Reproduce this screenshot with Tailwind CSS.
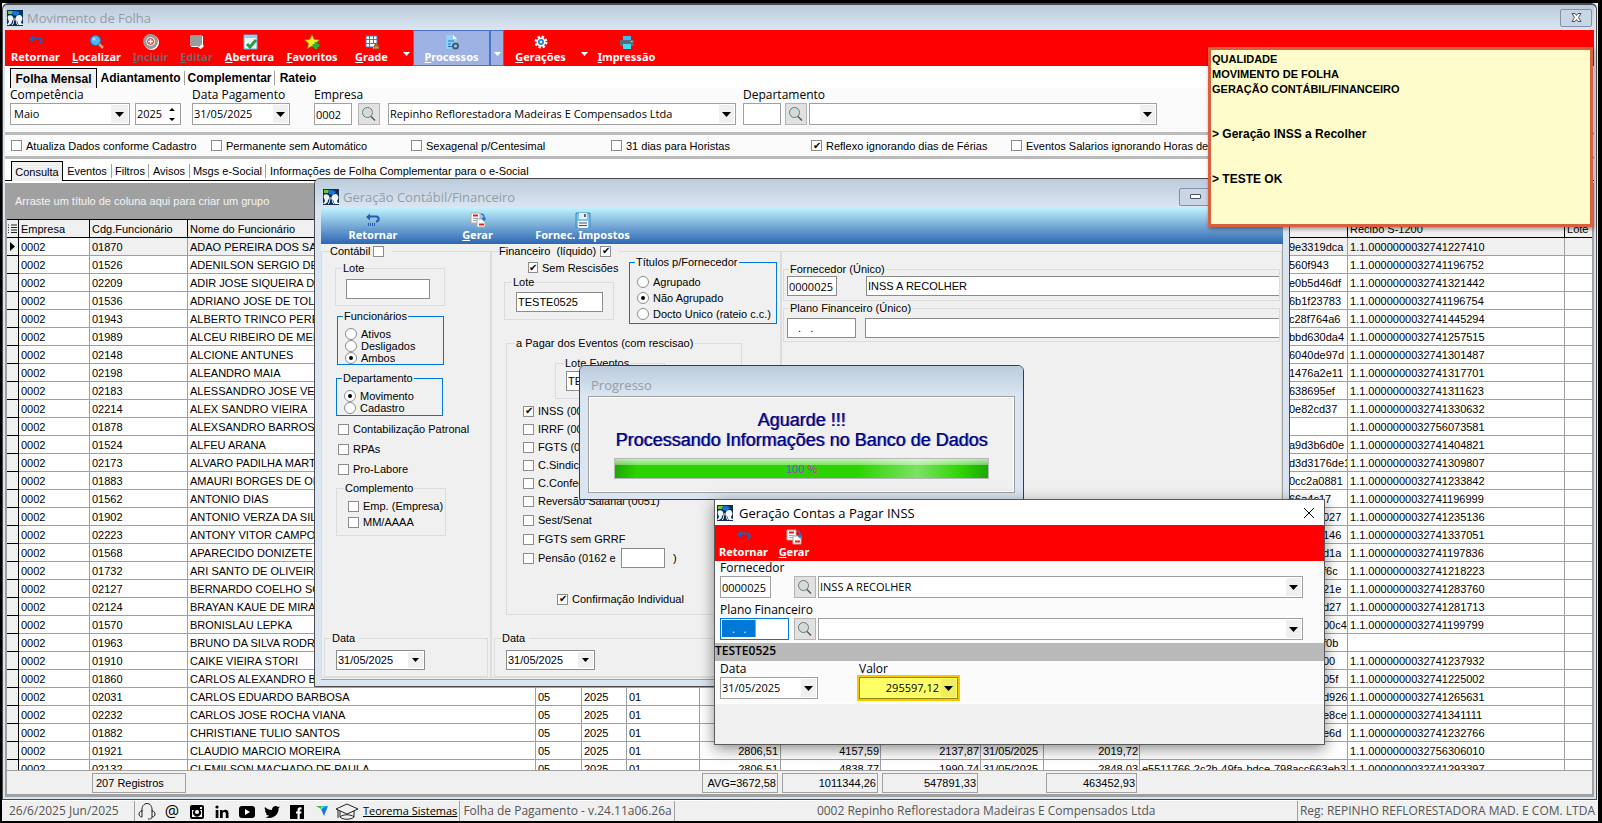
<!DOCTYPE html>
<html lang="pt-BR">
<head>
    <meta charset="UTF-8">
    <meta name="viewport" content="width=device-width, initial-scale=1.0">
    <title>Movimento de Folha</title>
    <script src="https://cdn.jsdelivr.net/npm/@tailwindcss/browser@4"></script>
</head>
<body class="bg-black h-screen overflow-hidden pt-[3px] pb-[2px] pl-[2px] pr-[4px] font-['Liberation_Sans',Arial,sans-serif] text-[11px] leading-[14px] text-black">

    <!-- Icons -->
    <svg class="hidden">
        <symbol id="i-app" viewBox="0 0 16 16">
            <rect width="16" height="16" fill="#0b2f57"/>
            <path d="M1 1h5l-1 3H1z" fill="#6ecb2f"/><path d="M5 2c3-2 6-1 8 1l-3 3-4-1z" fill="#1277e0"/>
            <path d="M1 6c1-1 4-1 5 1s0 3-1 4c0 2-1 3-3 4H0l2-3c0-2-2-3-1-6zM9 7c1-2 5-3 6 0 1 2 0 3-1 5 0 1 1 2 2 2v1h-4c-2-2-1-3-2-4s-2-2-1-4z" fill="#f2f7fc"/>
            <path d="M5 15c2-1 1-3 2-5 0-2 1-2 2 0s0 4 2 5" fill="none" stroke="#f2f7fc"/>
        </symbol>
        <symbol id="i-back" viewBox="0 0 16 16">
            <path d="M1 5l4-3.500v2h6c5 0 5 7 0 7v-2c2 0 2-3 0-3H5v3z" fill="#1f5fb8"/>
            <path d="M3.500 11v3M5.500 11v3M7.500 11v3M9.500 11v3" stroke="#1f5fb8" stroke-width="1"/>
        </symbol>
        <symbol id="i-find" viewBox="0 0 16 16">
            <path d="M10 10l4 4" stroke="#c9a27a" stroke-width="2.500"/>
            <circle cx="6.500" cy="6.500" r="5" fill="#4db4f5" stroke="#1c74c8"/><circle cx="5" cy="5" r="1.500" fill="#b9e2fc"/>
        </symbol>
        <symbol id="i-add" viewBox="0 0 16 16">
            <circle cx="8.500" cy="8.500" r="7.500" fill="#fff"/><circle cx="7.500" cy="7.500" r="7.500" fill="#9b9b9b"/>
            <circle cx="7.500" cy="7.500" r="4" fill="#c44" stroke="#fff"/><path d="M7.500 5v5M5 7.500h5" stroke="#fff" stroke-width="1.500"/>
        </symbol>
        <symbol id="i-edit" viewBox="0 0 16 16">
            <path d="M2 2h12v9l1 1-3 3-2-1-1-1H2z" fill="#fff"/><path d="M1 1h12v9l-3 3-2-1H1z" fill="#9b9b9b"/>
        </symbol>
        <symbol id="i-open" viewBox="0 0 16 16">
            <path d="M2 1h13v14H2z" fill="#e9f6fd" stroke="#5fb0dc"/><path d="M2 1h13v3H2z" fill="#8fd0f2"/>
            <path d="M5 10l3 3 6-7" fill="none" stroke="#2e9e3b" stroke-width="3"/>
        </symbol>
        <symbol id="i-star" viewBox="0 0 16 16">
            <path d="M8 .500l2.200 4.800 5.300.600-4 3.500 1.200 5.300L8 12.100l-4.700 2.600 1.200-5.300-4-3.500 5.300-.600z" fill="#ffe62e" stroke="#8a7400" stroke-width=".800"/>
            <path d="M12 8v7M8.500 11.500h7" stroke="#2fb12f" stroke-width="3"/>
        </symbol>
        <symbol id="i-grid" viewBox="0 0 16 16">
            <path d="M2 2h11v11H2z" fill="#fff" stroke="#2f7fd0"/><path d="M2 5.500h11M2 9.500h11M5.500 2v11M9.500 2v11" stroke="#2f7fd0"/>
            <path d="M9 10h5v5H9z" fill="#fff"/><path d="M10 12h5v3h-5zM11 12v-2h3v2" fill="#d4a04a" stroke="#9c4a2a"/>
        </symbol>
        <symbol id="i-proc" viewBox="0 0 16 16">
            <path d="M2 1h7l4 4v10H2z" fill="#8fd0f7"/><path d="M9 1l4 4H9z" fill="#fff"/><path d="M4 7h6M4 10h3M4 12.500h4" stroke="#1c6fd0"/>
            <circle cx="11.500" cy="12" r="2.500" fill="none" stroke="#4b5a6b" stroke-width="2"/>
        </symbol>
        <symbol id="i-gear" viewBox="0 0 16 16">
            <circle cx="8" cy="8" r="5" fill="none" stroke="#fff" stroke-width="3" stroke-dasharray="2.200 1.727"/>
            <circle cx="8" cy="8" r="4.500" fill="#fff"/><circle cx="8" cy="8" r="3" fill="#1d86e0"/><circle cx="8" cy="8" r="1.200" fill="#fff"/>
        </symbol>
        <symbol id="i-print" viewBox="0 0 16 16">
            <path d="M4 2h8v4H4z" fill="#42b8f0"/><path d="M1 6h14v6H1z" fill="#5a6b78"/><path d="M4 10h8v5H4z" fill="#3fdcf0"/><path d="M12 7.500h1.500" stroke="#bfe8ff"/>
        </symbol>
        <symbol id="i-gen" viewBox="0 0 16 16">
            <path d="M1 1h9v10H1z" fill="#fff" stroke="#b8a8a0"/><path d="M3 3.500h5" stroke="#e02020" stroke-width="2"/><path d="M3 6.500h5M3 8.500h4" stroke="#8fa5c8"/>
            <path d="M7 7h8v8H7z" fill="#fff" stroke="#b8a8a0"/><path d="M9 12.500h5" stroke="#e02020" stroke-width="2"/>
            <path d="M11 2c3 0 3 2 3 5M12 6l2 2.500L15.500 6" fill="none" stroke="#1f78d0" stroke-width="1.500"/>
        </symbol>
        <symbol id="i-save" viewBox="0 0 16 16">
            <path d="M1 1h14v15H1z" fill="#7ec4ee" stroke="#3a86c0"/><path d="M4 1h8v6H4z" fill="#e4eef5"/><path d="M9 2h2v3H9z" fill="#4a6a88"/>
            <path d="M3 9h10v7H3z" fill="#f4f4f4"/><path d="M4 11h8M4 13.500h8" stroke="#555"/>
        </symbol>
        <symbol id="i-lens" viewBox="0 0 16 16">
            <circle cx="6.500" cy="6.500" r="5" fill="#d3dcda" stroke="#6b7a78"/><path d="M10 10.500l4 4" stroke="#555" stroke-width="1.500"/>
        </symbol>
        <symbol id="i-down" viewBox="0 0 9 5"><path d="M0 0h9L4.500 5z" fill="currentColor"/></symbol>
    </svg>

    <div class="h-full flex flex-col bg-[#f0f0f0]">

        <!-- Main window -->
        <main class="flex-1 min-h-0 mr-px flex flex-col border border-t-2 border-[#4a4a4a] rounded-t-[6px] bg-[#dae5f1] px-[2px] pb-[2px] overflow-hidden">
            <header class="h-[25px] shrink-0 flex items-center justify-between pl-[2px] pr-[2px] bg-linear-to-b from-[#bccbdb] to-[#dae6f2]">
                <h1 class="flex items-center gap-1 font-['Open_Sans',sans-serif] text-[13px] text-[#969ca3]">
                    <svg class="size-4"><use href="#i-app"/></svg>Movimento de Folha
                </h1>
                <button aria-label="Fechar" class="w-8 h-[18px] border border-[#8290b0] rounded-[2px] flex items-center justify-center bg-[#c9d6e4]">
                    <svg class="w-[11px] h-[9px]" viewBox="0 0 11 9"><path d="M1 .500h3l1.500 2 1.500-2h3L7.500 4.500 10 8.500H7l-1.500-2-1.500 2H1l2.500-4z" fill="#fff" stroke="#4b5060"/></svg>
                </button>
            </header>

            <nav class="h-9 shrink-0 flex items-stretch bg-[#ff0000] text-white font-['Noto_Sans',sans-serif] font-bold text-[11px]">
                <button class="w-[61px] flex flex-col items-center pt-1"><svg class="size-4"><use href="#i-back"/></svg>Retornar</button>
                <button class="w-[61px] flex flex-col items-center pt-1"><svg class="size-4"><use href="#i-find"/></svg><span><u>L</u>ocalizar</span></button>
                <button class="w-[47px] flex flex-col items-center pt-1 text-[#806464]"><svg class="size-4"><use href="#i-add"/></svg><span><u>I</u>ncluir</span></button>
                <button class="w-[45px] flex flex-col items-center pt-1 text-[#806464]"><svg class="size-4"><use href="#i-edit"/></svg><span><u>E</u>ditar</span></button>
                <button class="w-[61px] flex flex-col items-center pt-1"><svg class="size-4"><use href="#i-open"/></svg><span><u>A</u>bertura</span></button>
                <button class="w-[64px] flex flex-col items-center pt-1"><svg class="size-4"><use href="#i-star"/></svg><span><u>F</u>avoritos</span></button>
                <button class="w-[55px] flex flex-col items-center pt-1"><svg class="size-4"><use href="#i-grid"/></svg><span><u>G</u>rade</span></button>
                <button aria-label="Mais opções de grade" class="w-[14px] flex items-center justify-center pt-3"><svg class="w-[7px] h-[4px]"><use href="#i-down"/></svg></button>
                <button class="w-[77px] flex flex-col items-center pt-[3px] bg-[#9db2e2] border border-[#4a72cc]"><svg class="size-4"><use href="#i-proc"/></svg><span><u>P</u>rocessos</span></button>
                <button aria-label="Mais processos" class="w-[14px] flex items-center justify-center pt-3 bg-[#9db2e2] border border-[#4a72cc]"><svg class="w-[7px] h-[4px]"><use href="#i-down"/></svg></button>
                <button class="w-[73px] flex flex-col items-center pt-1"><svg class="size-4"><use href="#i-gear"/></svg><span><u>G</u>erações</span></button>
                <button aria-label="Mais gerações" class="w-[14px] flex items-center justify-center pt-3"><svg class="w-[7px] h-[4px]"><use href="#i-down"/></svg></button>
                <button class="w-[71px] flex flex-col items-center pt-1"><svg class="size-4"><use href="#i-print"/></svg><span><u>I</u>mpressão</span></button>
            </nav>

            <div role="tablist" class="h-[22px] shrink-0 flex items-center bg-white pl-[5px] pt-[2px] font-bold text-[12px]">
                <button role="tab" class="h-5 w-[87px] border border-b-0 border-black bg-[#f0f0f0]">Folha Mensal</button>
                <button role="tab" class="w-[88px] border-r border-[#a0a0a0]">Adiantamento</button>
                <button role="tab" class="w-[90px] border-r border-[#a0a0a0]">Complementar</button>
                <button role="tab" class="w-[46px]">Rateio</button>
            </div>

            <form class="h-11 shrink-0 flex items-start bg-[#fbfbfb] pl-[5px] font-['Open_Sans',sans-serif] text-[11px]">
                <div class="w-[120px]">
                    <label for="competencia" class="block h-[15px] leading-[13px] text-[12px]">Competência</label>
                    <div class="h-[22px] flex border border-[#a0a0a0] bg-white">
                        <select id="competencia" class="appearance-none flex-1 min-w-0 pl-[3px]"><option>Maio</option></select>
                        <span class="w-[17px] m-px bg-[#f0f0f0] flex items-center justify-center"><svg class="w-[9px] h-[5px]"><use href="#i-down"/></svg></span>
                    </div>
                </div>
                <div class="ml-[5px] mt-[15px] w-[46px] h-[22px] flex border border-[#a0a0a0] bg-white">
                    <input type="text" aria-label="Ano" value="2025" class="w-[28px] pl-[1px]">
                    <button type="button" aria-label="Alterar ano" class="flex-1 flex items-center justify-center"><svg class="w-[6px] h-[13px]" viewBox="0 0 6 13"><path d="M0 3h6L3 0zM0 10h6L3 13z"/></svg></button>
                </div>
                <div class="ml-[11px] w-[98px]">
                    <label for="pagamento" class="block h-[15px] leading-[13px] text-[12px] whitespace-nowrap">Data Pagamento</label>
                    <div class="h-[22px] flex border border-[#a0a0a0] bg-white">
                        <input id="pagamento" type="text" value="31/05/2025" class="flex-1 min-w-0 pl-[1px]">
                        <button type="button" aria-label="Abrir calendário" class="w-[15px] m-px bg-[#f0f0f0] flex items-center justify-center"><svg class="w-[9px] h-[5px]"><use href="#i-down"/></svg></button>
                    </div>
                </div>
                <div class="ml-[24px] w-[38px]">
                    <label for="empresa" class="block h-[15px] leading-[13px] text-[12px] whitespace-nowrap">Empresa</label>
                    <input id="empresa" type="text" value="0002" class="h-[22px] w-full border border-[#a0a0a0] bg-white pl-[1px]">
                </div>
                <button type="button" aria-label="Buscar empresa" class="ml-[6px] mt-[15px] size-[22px] border border-[#b4b4b4] bg-[#e1e1e1] flex items-center justify-center"><svg class="size-4"><use href="#i-lens"/></svg></button>
                <div class="ml-[8px] mt-[15px] w-[348px] h-[22px] flex border border-[#a0a0a0] bg-white">
                    <select aria-label="Nome da empresa" class="appearance-none flex-1 min-w-0 pl-px"><option>Repinho Reflorestadora Madeiras E Compensados Ltda</option></select>
                    <span class="w-[15px] m-px bg-[#f0f0f0] flex items-center justify-center"><svg class="w-[9px] h-[5px]"><use href="#i-down"/></svg></span>
                </div>
                <div class="ml-[7px] w-[38px]">
                    <label for="departamento" class="block h-[15px] leading-[13px] text-[12px] whitespace-nowrap">Departamento</label>
                    <input id="departamento" type="text" class="h-[22px] w-full border border-[#a0a0a0] bg-white">
                </div>
                <button type="button" aria-label="Buscar departamento" class="ml-[4px] mt-[15px] size-[22px] border border-[#b4b4b4] bg-[#e1e1e1] flex items-center justify-center"><svg class="size-4"><use href="#i-lens"/></svg></button>
                <div class="ml-[2px] mt-[15px] w-[348px] h-[22px] flex border border-[#a0a0a0] bg-white">
                    <select aria-label="Nome do departamento" class="appearance-none flex-1 min-w-0"><option></option></select>
                    <span class="w-[15px] m-px bg-[#f0f0f0] flex items-center justify-center"><svg class="w-[9px] h-[5px]"><use href="#i-down"/></svg></span>
                </div>
            </form>

            <div class="h-[27px] shrink-0 flex items-center border-y-3 border-[#bbbbbb] bg-[#fbfbfb] pl-[6px] text-[11px]">
                <label class="w-[200px] flex items-center gap-1"><input type="checkbox" class="appearance-none size-[11px] border border-[#8c8c8c] bg-white">Atualiza Dados conforme Cadastro</label>
                <label class="w-[200px] flex items-center gap-1"><input type="checkbox" class="appearance-none size-[11px] border border-[#8c8c8c] bg-white">Permanente sem Automático</label>
                <label class="w-[200px] flex items-center gap-1"><input type="checkbox" class="appearance-none size-[11px] border border-[#8c8c8c] bg-white">Sexagenal p/Centesimal</label>
                <label class="w-[200px] flex items-center gap-1"><input type="checkbox" class="appearance-none size-[11px] border border-[#8c8c8c] bg-white">31 dias para Horistas</label>
                <label class="w-[200px] flex items-center gap-1"><input type="checkbox" checked class="appearance-none size-[11px] border border-[#8c8c8c] bg-white flex items-center justify-center before:content-['✔'] before:text-[10px] before:leading-none">Reflexo ignorando dias de Férias</label>
                <label class="flex items-center gap-1"><input type="checkbox" class="appearance-none size-[11px] border border-[#8c8c8c] bg-white">Eventos Salarios ignorando Horas de Falta</label>
            </div>

            <div role="tablist" class="h-[24px] shrink-0 flex bg-white pt-[2px] text-[11px]">
                <span class="w-[6px] h-5 border-b border-black"></span>
                <button role="tab" class="w-[52px] h-5 border border-b-0 border-black bg-[#f0f0f0]">Consulta</button>
                <div class="flex-1 h-5 flex items-center border-b border-black">
                    <button role="tab" class="w-[49px] border-r border-[#a0a0a0]">Eventos</button>
                    <button role="tab" class="w-[37px] border-r border-[#a0a0a0]">Filtros</button>
                    <button role="tab" class="w-[41px] border-r border-[#a0a0a0]">Avisos</button>
                    <button role="tab" class="w-[76px] border-r border-[#a0a0a0]">Msgs e-Social</button>
                    <button role="tab" class="px-[4px]">Informações de Folha Complementar para o e-Social</button>
                </div>
            </div>

            <section class="flex-1 min-h-0 flex flex-col bg-[#f0f0f0] border-l-2 border-r-2 border-b-3 border-[#a0a0a0]">
                <p class="h-9 shrink-0 flex items-center pl-[8px] bg-[#a0a0a0] text-[#f4f4f4]">Arraste um título de coluna aqui para criar um grupo</p>
                <div class="flex-1 min-h-0 overflow-hidden bg-white">
                    <table class="w-full table-fixed border-separate border-spacing-0">
                        <colgroup>
                            <col class="w-[12px]"><col class="w-[71px]"><col class="w-[98px]"><col class="w-[348px]"><col class="w-[46px]"><col class="w-[45px]"><col class="w-[73px]"><col class="w-[81px]"><col class="w-[100px]"><col class="w-[100px]"><col class="w-[63px]"><col class="w-[96px]"><col class="w-[208px]"><col class="w-[217px]"><col>
                        </colgroup>
                        <thead class="bg-[#f0f0f0] text-left">
                            <tr>
                                <th class="h-[19px] border-y border-r border-black p-0"><svg class="size-[9px] mx-auto" viewBox="0 0 9 9"><path d="M0 1h1M3 1h6M0 3.500h1M3 3.500h6M0 6h1M3 6h6M0 8.500h1M3 8.500h6" stroke="#222"/></svg></th>
                                <th class="h-[19px] border-y border-r border-black font-normal p-0 pl-[2px]">Empresa</th>
                                <th class="h-[19px] border-y border-r border-black font-normal p-0 pl-[2px]">Cdg.Funcionário</th>
                                <th class="h-[19px] border-y border-r border-black font-normal p-0 pl-[2px]">Nome do Funcionário</th>
                                <th colspan="9" class="h-[19px] border-y border-r border-black p-0"></th>
                                <th class="h-[19px] border-y border-r border-black font-normal p-0 pl-[2px]">Recibo S-1200</th>
                                <th class="h-[19px] border-y border-black font-normal p-0 pl-[2px]">Lote</th>
                            </tr>
                        </thead>
                        <tbody id="linhas"></tbody>
                    </table>
                </div>
                <div class="h-6 shrink-0 flex items-center border-t border-[#a0a0a0] pl-[85px] leading-[18px]">
                    <div class="w-[94px] h-5 border border-[#a0a0a0] pl-[3px]">207 Registros</div>
                    <div class="ml-[516px] w-[76px] h-5 border border-[#a0a0a0] pr-px text-right">AVG=3672,58</div>
                    <div class="ml-[4px] w-[96px] h-5 border border-[#a0a0a0] pr-px text-right">1011344,26</div>
                    <div class="ml-[4px] w-[96px] h-5 border border-[#a0a0a0] pr-px text-right">547891,33</div>
                    <div class="ml-[68px] w-[91px] h-5 border border-[#a0a0a0] pr-px text-right">463452,93</div>
                </div>
            </section>
        </main>

        <!-- Status bar -->
        <footer class="h-[21px] shrink-0 flex items-center border-t border-white font-['Open_Sans',sans-serif] text-[12px] text-[#555]">
            <span class="w-[133px] self-stretch pl-[7px] pt-[3px] border-r border-[#a0a0a0] whitespace-nowrap">26/6/2025 Jun/2025</span>
            <div class="flex items-center gap-[7px] pl-[3px] text-black">
                <a href="#" aria-label="Suporte"><svg class="size-[18px]" viewBox="0 0 18 18" fill="none" stroke="#222"><path d="M4 9c-1-10 11-10 10 0M4 8v7c-4 0-4-6 0-6M14 8v7c4 0 4-6 0-6M14 15c0 2-2 2-4 2"/></svg></a>
                <a href="#" aria-label="E-mail" class="w-[18px] text-center text-[16px] leading-[18px]">@</a>
                <a href="#" aria-label="Instagram"><svg class="size-[18px]" viewBox="0 0 18 18"><rect x="2" y="3" width="14" height="14" rx="2"/><path d="M4 8h2a4 4 0 106 0h2v7H4z" fill="#fff"/><circle cx="9" cy="10" r="3"/><circle cx="9" cy="10" r="2" fill="#fff"/><path d="M12 5h2v2h-2z" fill="#fff"/></svg></a>
                <a href="#" aria-label="LinkedIn"><svg class="size-[18px]" viewBox="0 0 18 18"><circle cx="4" cy="5" r="1.600"/><path d="M2.700 8h2.700v8H2.700zM7 8h2.600v1.200C11 7 15.500 7 15.500 11v5h-2.700v-4.500c0-2-3.100-2-3.100 0V16H7z"/></svg></a>
                <a href="#" aria-label="YouTube"><svg class="size-[18px]" viewBox="0 0 18 18"><rect x="1" y="4" width="16" height="12" rx="3"/><path d="M7 7l5 3-5 3z" fill="#fff"/></svg></a>
                <a href="#" aria-label="Twitter"><svg class="size-[18px]" viewBox="0 0 18 18"><path d="M2 5c2 2 4 3 7 3 0-4 4-5 6-3l2-.500-1.500 2C16 13 9 18 2 15c2 0 3-.500 4-1.500-2 0-3-1-3-2h1C2 10 2 9 2 8.500L3 9C1.500 7.500 1.500 6 2 5z"/></svg></a>
                <a href="#" aria-label="Facebook"><svg class="size-[18px]" viewBox="0 0 18 18"><rect x="2" y="3" width="14" height="14"/><path d="M9.500 17v-5.500H8V9.500h1.500V8c0-2 1.500-3 4-2.500v2c-1.500 0-1.800.200-1.800 2h1.800l-.300 2h-1.500V17z" fill="#fff"/></svg></a>
                <a href="#" aria-label="Teorema"><svg class="size-[18px]" viewBox="0 0 18 18"><path d="M3 4h6l-1 3z" fill="#35c435"/><path d="M9 4h6l-5 4z" fill="#20c8e8"/><path d="M8 7l7-3-4 10z" fill="#1877e8"/></svg></a>
            </div>
            <a href="#" class="flex items-center gap-1 pl-1 pr-[2px] text-black"><svg class="w-[24px] h-[17px]" viewBox="0 0 24 17" fill="none" stroke="#222"><path d="M1 6l11-5 11 5-11 5zM5 8v6c3-3 11-3 14 0V8M5 14c3 3 11 3 14 0M3 7v8"/></svg><span class="underline text-[11px]">Teorema Sistemas</span></a>
            <span class="w-[216px] self-stretch pl-[3px] pt-[3px] border-x border-[#a0a0a0] whitespace-nowrap">Folha de Pagamento - v.24.11a06.26a</span>
            <span class="flex-1 text-center whitespace-nowrap">0002 Repinho Reflorestadora Madeiras E Compensados Ltda</span>
            <span class="self-stretch pl-[2px] pr-[3px] pt-[3px] border-l border-[#a0a0a0] whitespace-nowrap">Reg: REPINHO REFLORESTADORA MAD. E COM. LTDA</span>
        </footer>
    </div>

    <!-- Geração Contábil/Financeiro -->
    <section class="absolute left-[314px] top-[178px] w-[976px] border border-[#4a4a4a] rounded-t-[6px] bg-[#dae5f1] px-[6px] pb-[6px]">
        <header class="h-[29px] flex items-center justify-between pt-[6px] -mx-[6px] px-[8px] rounded-t-[5px] bg-linear-to-b from-[#bccbdb] to-[#dae6f2]">
            <h2 class="flex items-center gap-1 font-['Open_Sans',sans-serif] text-[13px] text-[#969ca3]"><svg class="size-4"><use href="#i-app"/></svg>Geração Contábil/Financeiro</h2>
            <button aria-label="Minimizar" class="mr-[70px] w-8 h-[18px] border border-[#8290b0] rounded-[2px] flex items-center justify-center bg-[#c9d6e4]"><span class="w-[11px] h-[5px] border border-[#4b5060] bg-white rounded-[1px]"></span></button>
        </header>
        <nav class="h-9 flex bg-linear-to-b from-[#bff2fd] via-[#77a9d6] to-[#2d67b3] text-white font-['Noto_Sans',sans-serif] font-bold text-[11px]">
            <button class="w-[104px] flex flex-col items-center pt-1"><svg class="size-4"><use href="#i-back"/></svg>Retornar</button>
            <button class="w-[105px] flex flex-col items-center pt-1"><svg class="size-4"><use href="#i-gen"/></svg><span><u>G</u>erar</span></button>
            <button class="w-[105px] flex flex-col items-center pt-1"><svg class="size-4"><use href="#i-save"/></svg>Fornec. Impostos</button>
        </nav>
        <div class="h-[436px] flex bg-[#f0f0f0] border-b border-r border-[#a0a0a0] pb-px">
            <fieldset class="w-[170px] flex flex-col border border-[#dcdcdc]">
                <legend class="ml-[8px] pr-2"><label class="h-[14px] flex items-center gap-[3px]">Contábil<input type="checkbox" class="appearance-none size-[11px] border border-[#8c8c8c] bg-white"></label></legend>
                <div class="flex-1 flex flex-col items-start">
                    <fieldset class="ml-[13px] mt-[3px] w-[110px] border border-[#dcdcdc] pl-[10px] pt-1 pb-1.5">
                        <legend class="-ml-[4px] px-px">Lote</legend>
                        <input type="text" aria-label="Lote contábil" class="block w-[84px] h-5 border border-[#8c8c8c] bg-white">
                    </fieldset>
                    <fieldset class="ml-[15px] mt-[3px] w-[107px] border border-[#0078d7] pt-[5px] pl-[7px] leading-[12px]">
                        <legend class="-ml-[2px] px-px leading-[14px]">Funcionários</legend>
                        <label class="h-3 flex items-center gap-1"><input type="radio" name="func" class="appearance-none size-3 rounded-full border border-[#8c8c8c] bg-white">Ativos</label>
                        <label class="h-3 flex items-center gap-1"><input type="radio" name="func" class="appearance-none size-3 rounded-full border border-[#8c8c8c] bg-white">Desligados</label>
                        <label class="h-3 flex items-center gap-1"><input type="radio" name="func" checked class="appearance-none size-3 rounded-full border-4 border-white bg-black outline outline-[#8c8c8c] -outline-offset-1">Ambos</label>
                    </fieldset>
                    <fieldset class="ml-[14px] mt-1.5 w-[107px] border border-[#0078d7] pt-[5px] pb-px pl-[7px] leading-[12px]">
                        <legend class="-ml-[2px] px-px leading-[14px]">Departamento</legend>
                        <label class="h-3 flex items-center gap-1"><input type="radio" name="dep" checked class="appearance-none size-3 rounded-full border-4 border-white bg-black outline outline-[#8c8c8c] -outline-offset-1">Movimento</label>
                        <label class="h-3 flex items-center gap-1"><input type="radio" name="dep" class="appearance-none size-3 rounded-full border border-[#8c8c8c] bg-white">Cadastro</label>
                    </fieldset>
                    <div class="ml-[16px] mt-[3px]">
                        <label class="h-5 flex items-center gap-1"><input type="checkbox" class="appearance-none size-[11px] border border-[#8c8c8c] bg-white">Contabilização Patronal</label>
                        <label class="h-5 flex items-center gap-1"><input type="checkbox" class="appearance-none size-[11px] border border-[#8c8c8c] bg-white">RPAs</label>
                        <label class="h-5 flex items-center gap-1"><input type="checkbox" class="appearance-none size-[11px] border border-[#8c8c8c] bg-white">Pro-Labore</label>
                    </div>
                    <fieldset class="ml-[14px] mt-[2px] w-[110px] border border-[#dcdcdc] pt-[3px] pb-[5px] pl-[11px]">
                        <legend class="-ml-[4px] px-px">Complemento</legend>
                        <label class="h-4 flex items-center gap-1"><input type="checkbox" class="appearance-none size-[11px] border border-[#8c8c8c] bg-white">Emp. (Empresa)</label>
                        <label class="h-4 flex items-center gap-1"><input type="checkbox" class="appearance-none size-[11px] border border-[#8c8c8c] bg-white">MM/AAAA</label>
                    </fieldset>
                </div>
                <fieldset class="mx-[2px] border border-[#dcdcdc] pt-[5px] pb-1.5 pl-[11px]">
                    <legend class="-ml-[5px] pl-px pr-1">Data</legend>
                    <div class="w-[89px] h-5 flex border border-[#8c8c8c] bg-white">
                        <input type="text" aria-label="Data contábil" value="31/05/2025" class="flex-1 min-w-0 pl-[1px]">
                        <button aria-label="Abrir calendário" class="w-[15px] m-px bg-[#f0f0f0] flex items-center justify-center"><svg class="w-[7px] h-[4px]"><use href="#i-down"/></svg></button>
                    </div>
                </fieldset>
            </fieldset>

            <fieldset class="w-[290px] flex flex-col border border-[#dcdcdc]">
                <legend class="ml-[7px] pr-2"><label class="h-[14px] flex items-center gap-1"><span>Financeiro &nbsp;(líquido)</span><input type="checkbox" checked class="appearance-none size-[11px] border border-[#8c8c8c] bg-white flex items-center justify-center before:content-['✔'] before:text-[10px] before:leading-none"></label></legend>
                <div class="flex items-start">
                    <div class="w-[126px] pl-[12px] pt-[2px]">
                        <label class="h-[15px] flex items-center gap-1 ml-6 whitespace-nowrap"><input type="checkbox" checked class="appearance-none size-[11px] border border-[#8c8c8c] bg-white flex items-center justify-center before:content-['✔'] before:text-[10px] before:leading-none">Sem Rescisões</label>
                        <fieldset class="w-[110px] border border-[#dcdcdc] pl-[11px] pt-[3px] pb-[7px]">
                            <legend class="-ml-[4px] px-px">Lote</legend>
                            <input type="text" aria-label="Lote financeiro" value="TESTE0525" class="block w-[87px] h-5 border border-[#8c8c8c] bg-white pl-[1px]">
                        </fieldset>
                    </div>
                    <fieldset class="ml-[11px] -mt-[3px] w-[148px] border border-[#0078d7] pl-[7px] pt-[5px] pb-px whitespace-nowrap">
                        <legend class="-ml-[2px] px-px">Títulos p/Fornecedor</legend>
                        <label class="h-4 flex items-center gap-1"><input type="radio" name="tit" class="appearance-none size-3 rounded-full border border-[#8c8c8c] bg-white">Agrupado</label>
                        <label class="h-4 flex items-center gap-1"><input type="radio" name="tit" checked class="appearance-none size-3 rounded-full border-4 border-white bg-black outline outline-[#8c8c8c] -outline-offset-1">Não Agrupado</label>
                        <label class="h-4 flex items-center gap-1"><input type="radio" name="tit" class="appearance-none size-3 rounded-full border border-[#8c8c8c] bg-white">Docto Unico (rateio c.c.)</label>
                    </fieldset>
                </div>
                <fieldset class="ml-[14px] mt-[12px] w-[236px] border border-[#dcdcdc] pl-[16px] pb-1.5">
                    <legend class="-ml-[8px] px-px">a Pagar dos Eventos (com rescisao)</legend>
                    <fieldset class="ml-8 mt-1.5 w-[110px] border border-[#dcdcdc] pl-[10px] pt-px pb-[7px]">
                        <legend class="-ml-[2px] px-px">Lote Eventos</legend>
                        <input type="text" aria-label="Lote eventos" value="TESTE0525" class="block w-[87px] h-5 border border-[#8c8c8c] bg-white pl-[1px]">
                    </fieldset>
                    <label class="mt-[3px] h-[18px] flex items-center gap-1"><input type="checkbox" checked class="appearance-none size-[11px] border border-[#8c8c8c] bg-white flex items-center justify-center before:content-['✔'] before:text-[10px] before:leading-none">INSS (0050)</label>
                    <label class="h-[18px] flex items-center gap-1"><input type="checkbox" class="appearance-none size-[11px] border border-[#8c8c8c] bg-white">IRRF (0060)</label>
                    <label class="h-[18px] flex items-center gap-1"><input type="checkbox" class="appearance-none size-[11px] border border-[#8c8c8c] bg-white">FGTS (0070)</label>
                    <label class="h-[18px] flex items-center gap-1"><input type="checkbox" class="appearance-none size-[11px] border border-[#8c8c8c] bg-white">C.Sindical</label>
                    <label class="h-[18px] flex items-center gap-1"><input type="checkbox" class="appearance-none size-[11px] border border-[#8c8c8c] bg-white">C.Confederativa</label>
                    <label class="h-[18px] flex items-center gap-1"><input type="checkbox" class="appearance-none size-[11px] border border-[#8c8c8c] bg-white">Reversão Salarial (0051)</label>
                    <label class="h-5 flex items-center gap-1"><input type="checkbox" class="appearance-none size-[11px] border border-[#8c8c8c] bg-white">Sest/Senat</label>
                    <label class="h-[18px] flex items-center gap-1"><input type="checkbox" class="appearance-none size-[11px] border border-[#8c8c8c] bg-white">FGTS sem GRRF</label>
                    <div class="h-5 flex items-center">
                        <label class="w-[98px] flex items-center gap-1"><input type="checkbox" class="appearance-none size-[11px] border border-[#8c8c8c] bg-white">Pensão (0162 e</label>
                        <input type="text" aria-label="Evento de pensão" class="w-[44px] h-5 border border-[#8c8c8c] bg-white"><span class="ml-2">)</span>
                    </div>
                    <label class="ml-[34px] mt-[22px] h-[18px] flex items-center gap-1"><input type="checkbox" checked class="appearance-none size-[11px] border border-[#8c8c8c] bg-white flex items-center justify-center before:content-['✔'] before:text-[10px] before:leading-none">Confirmação Individual</label>
                </fieldset>
                <fieldset class="mt-auto mx-[2px] border border-[#dcdcdc] pt-[5px] pb-1.5 pl-[11px]">
                    <legend class="-ml-[5px] pl-px pr-1">Data</legend>
                    <div class="w-[89px] h-5 flex border border-[#8c8c8c] bg-white">
                        <input type="text" aria-label="Data financeiro" value="31/05/2025" class="flex-1 min-w-0 pl-[1px]">
                        <button aria-label="Abrir calendário" class="w-[15px] m-px bg-[#f0f0f0] flex items-center justify-center"><svg class="w-[7px] h-[4px]"><use href="#i-down"/></svg></button>
                    </div>
                </fieldset>
            </fieldset>

            <div class="flex-1 min-w-0 mt-[7px] border border-[#dcdcdc] pt-[10px] px-px">
                <fieldset class="border border-[#dcdcdc] pb-[4px] pl-[3px]">
                    <legend class="ml-[2px] px-px">Fornecedor (Único)</legend>
                    <div class="flex">
                        <input type="text" aria-label="Código do fornecedor" value="0000025" class="w-[50px] h-5 border border-[#8c8c8c] bg-white pl-px font-['Open_Sans',sans-serif]">
                        <input type="text" aria-label="Nome do fornecedor" value="INSS A RECOLHER" class="ml-[29px] flex-1 min-w-0 h-5 border border-r-0 border-[#8c8c8c] bg-white pl-px">
                    </div>
                </fieldset>
                <fieldset class="border border-[#dcdcdc] pt-[3px] pb-[3px] pl-[3px]">
                    <legend class="ml-[2px] px-px">Plano Financeiro (Único)</legend>
                    <div class="flex">
                        <input type="text" aria-label="Código do plano" value=".   ." class="w-[69px] h-5 border border-[#8c8c8c] bg-white pl-[10px]">
                        <input type="text" aria-label="Nome do plano" class="ml-[9px] flex-1 min-w-0 h-5 border border-r-0 border-[#8c8c8c] bg-white">
                    </div>
                </fieldset>
            </div>
        </div>
    </section>

    <!-- Progresso -->
    <section class="absolute left-[579px] top-[365px] w-[445px] border border-[#3c3c3c] rounded-t-[6px] bg-[#dae5f1] px-[8px] pb-[6px]">
        <h2 class="h-[30px] -mx-[8px] px-[11px] pt-[8px] rounded-t-[5px] flex items-center bg-linear-to-b from-[#bccbdb] to-[#dae6f2] font-['Open_Sans',sans-serif] text-[13px] text-[#969ca3]">Progresso</h2>
        <div class="h-[97px] border border-[#a0a0a0] ring-1 ring-inset ring-white bg-[#f0f0f0] px-[25px] pt-[13px] text-center text-[18px] leading-5 text-[#000080]">
            <p class="-mx-2 whitespace-nowrap [text-shadow:1px_0_0_#6a6ab0]">Aguarde !!!</p>
            <p class="-mx-2 whitespace-nowrap [text-shadow:1px_0_0_#6a6ab0]">Processando Informações no Banco de Dados</p>
            <div role="progressbar" aria-valuenow="100" class="mt-[8px] h-[21px] border border-[#b8b8b8] bg-[linear-gradient(to_right,#1fa800,#2bd400_6%,#2bd400_65%,#7de264_81%,#2bd400_93%,#1fa800)]">
                <div class="h-full bg-linear-to-b from-white/70 from-0% via-white/40 via-30% to-transparent to-30% text-[11px] leading-5 text-[#b030d0]">100 %</div>
            </div>
        </div>
    </section>

    <!-- Geração Contas a Pagar INSS -->
    <section class="absolute left-[714px] top-[499px] w-[611px] border border-[#5a5a5a] bg-[#fbfbfb] shadow-[0_4px_14px_rgba(0,0,0,0.45)] font-['Open_Sans',sans-serif] text-[11px]">
        <header class="h-[25px] flex items-center justify-between bg-white pl-[2px] pr-[9px]">
            <h2 class="flex items-center gap-[6px] text-[13px]"><svg class="size-4"><use href="#i-app"/></svg>Geração Contas a Pagar INSS</h2>
            <button aria-label="Fechar"><svg class="size-[12px]" viewBox="0 0 12 12"><path d="M1 1l10 10M11 1L1 11" stroke="#000"/></svg></button>
        </header>
        <nav class="h-9 flex bg-[#ff0000] text-white font-['Noto_Sans',sans-serif] font-bold text-[11px]">
            <button class="w-[57px] flex flex-col items-center pt-1"><svg class="size-4"><use href="#i-back"/></svg>Retornar</button>
            <button class="w-[44px] flex flex-col items-center pt-1"><svg class="size-4"><use href="#i-gen"/></svg><span><u>G</u>erar</span></button>
        </nav>
        <div class="pl-[5px] pr-[21px] pb-[3px] flex flex-col gap-[5px]">
            <div>
                <label for="fornecedor" class="block h-[15px] leading-[14px] text-[12px]">Fornecedor</label>
                <div class="flex">
                    <div class="w-[74px]"><input id="fornecedor" type="text" value="0000025" class="block w-[51px] h-[22px] border border-[#a0a0a0] bg-white pl-px"></div>
                    <button aria-label="Buscar fornecedor" class="size-[22px] border border-[#b4b4b4] bg-[#e1e1e1] flex items-center justify-center"><svg class="size-4"><use href="#i-lens"/></svg></button>
                    <div class="ml-[2px] flex-1 flex border border-[#a0a0a0] bg-white">
                        <select aria-label="Nome do fornecedor" class="appearance-none flex-1 min-w-0 pl-px"><option>INSS A RECOLHER</option></select>
                        <span class="w-[15px] m-px bg-[#f0f0f0] flex items-center justify-center"><svg class="w-[9px] h-[5px]"><use href="#i-down"/></svg></span>
                    </div>
                </div>
            </div>
            <div>
                <label for="plano" class="block h-[15px] leading-[14px] text-[12px]">Plano Financeiro</label>
                <div class="flex">
                    <div class="w-[74px]">
                        <div class="w-[69px] h-[22px] border border-[#0078d7] bg-white p-px">
                            <input id="plano" type="text" value=".   ." class="block w-[34px] h-[17px] pl-[10px] bg-[#0078d7] text-white border-r border-[#ff8728]">
                        </div>
                    </div>
                    <button aria-label="Buscar plano" class="size-[22px] border border-[#b4b4b4] bg-[#e1e1e1] flex items-center justify-center"><svg class="size-4"><use href="#i-lens"/></svg></button>
                    <div class="ml-[2px] flex-1 flex border border-[#a0a0a0] bg-white">
                        <select aria-label="Nome do plano" class="appearance-none flex-1 min-w-0"><option></option></select>
                        <span class="w-[15px] m-px bg-[#f0f0f0] flex items-center justify-center"><svg class="w-[9px] h-[5px]"><use href="#i-down"/></svg></span>
                    </div>
                </div>
            </div>
        </div>
        <h3 class="h-[18px] leading-4 bg-[#b9b9b9] font-semibold text-[12px]">TESTE0525</h3>
        <div class="flex pl-[5px] pb-[3px]">
            <div class="w-[139px]">
                <label for="data" class="block h-4 leading-[15px] text-[12px]">Data</label>
                <div class="w-[98px] h-[22px] flex border border-[#a0a0a0] bg-white">
                    <input id="data" type="text" value="31/05/2025" class="flex-1 min-w-0 pl-px">
                    <button aria-label="Abrir calendário" class="w-[15px] m-px bg-[#f0f0f0] flex items-center justify-center"><svg class="w-[9px] h-[5px]"><use href="#i-down"/></svg></button>
                </div>
            </div>
            <div>
                <label for="valor" class="block h-4 leading-[15px] text-[12px]">Valor</label>
                <div class="w-[99px] h-[22px] flex border border-[#8f8a10] outline-2 outline-[#f5c800] bg-[#ffff66]">
                    <input id="valor" type="text" value="295597,12" class="flex-1 min-w-0 pr-px text-right">
                    <button aria-label="Abrir calculadora" class="w-[15px] m-px bg-[#f0ee60] flex items-center justify-center"><svg class="w-[9px] h-[5px]"><use href="#i-down"/></svg></button>
                </div>
            </div>
        </div>
        <div class="h-[42px] border-t-2 border-white bg-[#f0f0f0]"></div>
    </section>

    <!-- Sticky note -->
    <aside class="absolute left-[1208px] top-[47px] w-[385px] h-[180px] border-3 border-[#d9603f] bg-[#fffccb] shadow-[1px_2px_4px_rgba(0,0,0,0.4)] pt-[2px] pl-px font-bold text-[12px] leading-[15px]">
        <div class="text-[11px]">
            <p>QUALIDADE</p>
            <p>MOVIMENTO DE FOLHA</p>
            <p>GERAÇÃO CONTÁBIL/FINANCEIRO</p>
        </div>
        <p class="mt-[30px]">&gt; Geração INSS a Recolher</p>
        <p class="mt-[30px]">&gt; TESTE OK</p>
    </aside>

    <script>
        // codigo, nome, id do evento, final do recibo
        const funcionarios = [
            ['01870', 'ADAO PEREIRA DOS SANTOS', '9e3319dca', '2741227410'],
            ['01526', 'ADENILSON SERGIO DE', '560f943', '2741196752'],
            ['02209', 'ADIR JOSE SIQUEIRA DA', 'e0b5d46df', '2741321442'],
            ['01536', 'ADRIANO JOSE DE TOLEDO', '6b1f23783', '2741196754'],
            ['01943', 'ALBERTO TRINCO PEREIRA', 'c28f764a6', '2741445294'],
            ['01989', 'ALCEU RIBEIRO DE MEIRA', 'bbd630da4', '2741257515'],
            ['02148', 'ALCIONE ANTUNES', '6040de97d', '2741301487'],
            ['02198', 'ALEANDRO MAIA', '1476a2e11', '2741317701'],
            ['02183', 'ALESSANDRO JOSE VENANCIO', '638695ef', '2741311623'],
            ['02214', 'ALEX SANDRO VIEIRA', '0e82cd37', '2741330632'],
            ['01878', 'ALEXSANDRO BARROS', '', '2756073581'],
            ['01524', 'ALFEU ARANA', 'a9d3b6d0e', '2741404821'],
            ['02173', 'ALVARO PADILHA MARTINS', 'd3d3176de1', '2741309807'],
            ['01883', 'AMAURI BORGES DE OLIVEIRA', '0cc2a0881', '2741233842'],
            ['01562', 'ANTONIO DIAS', '66a4c17', '2741196999'],
            ['01902', 'ANTONIO VERZA DA SILVA', '027', '2741235136'],
            ['02223', 'ANTONY VITOR CAMPOS', '146', '2741337051'],
            ['01568', 'APARECIDO DONIZETE', 'd1a', '2741197836'],
            ['01732', 'ARI SANTO DE OLIVEIRA', 'f6c', '2741218223'],
            ['02127', 'BERNARDO COELHO SOUZA', '21e', '2741283760'],
            ['02124', 'BRAYAN KAUE DE MIRANDA', 'd27', '2741281713'],
            ['01570', 'BRONISLAU LEPKA', '00c4', '2741199799'],
            ['01963', 'BRUNO DA SILVA RODRIGUES', 'f0b', ''],
            ['01910', 'CAIKE VIEIRA STORI', '00', '2741237932'],
            ['01860', 'CARLOS ALEXANDRO BUENO', '05f', '2741225002'],
            ['02031', 'CARLOS EDUARDO BARBOSA', 'd926', '2741265631'],
            ['02232', 'CARLOS JOSE ROCHA VIANA', 'e8ce', '2741341111'],
            ['01882', 'CHRISTIANE TULIO SANTOS', 'e6d', '2741232766'],
            ['01921', 'CLAUDIO MARCIO MOREIRA', '', '2756306010', '2806,51', '4157,59', '2137,87', '31/05/2025', '2019,72'],
            ['02132', 'CLEMILSON MACHADO DE PAULA', 'e5511766-2c2b-49fa-bdce-798acc663eb3', '2741293397', '2806,51', '4838,77', '1990,74', '31/05/2025', '2848,03']
        ];

        const td = 'h-[18px] p-0 border-b border-r border-[#a0a0a0] whitespace-nowrap overflow-hidden';

        document.getElementById('linhas').innerHTML = funcionarios.map((f, i) => {
            const [cod, nome, id, recibo, v1 = '', v2 = '', v3 = '', data = '', v4 = ''] = f;
            const recuo = i < 15 ? 'pl-[149px]' : i < 28 ? 'pl-[183px]' : 'pl-[2px]';
            return `
            <tr class="${i === 0 ? 'bg-[#f0f0f0]' : 'bg-white'}">
                <td class="h-[18px] p-0 border-b border-r border-black bg-[#f0f0f0]">${i === 0 ? '<svg class="w-[5px] h-[9px] mx-auto" viewBox="0 0 5 9"><path d="M0 0v9l5-4.500z"/></svg>' : ''}</td>
                <td class="${td} bg-white"><span class="pl-[2px]">0002</span></td>
                <td class="${td}"><span class="pl-[2px]">${cod}</span></td>
                <td class="${td}"><span class="pl-[2px]">${nome}</span></td>
                <td class="${td}"><span class="pl-[2px]">05</span></td>
                <td class="${td}"><span class="pl-[2px]">2025</span></td>
                <td class="${td}"><span class="pl-[2px]">01</span></td>
                <td class="${td} text-right"><span class="pr-[2px]">${v1}</span></td>
                <td class="${td} text-right"><span class="pr-[1px]">${v2}</span></td>
                <td class="${td} text-right"><span class="pr-[1px]">${v3}</span></td>
                <td class="${td}"><span class="pl-[2px]">${data}</span></td>
                <td class="${td} text-right"><span class="pr-[1px]">${v4}</span></td>
                <td class="${td}"><span class="${recuo}">${id}</span></td>
                <td class="${td}"><span class="pl-[2px]">${recibo ? '1.1.000000003' + recibo : ''}</span></td>
                <td class="h-[18px] p-0 border-b border-[#a0a0a0]"></td>
            </tr>`;
        }).join('');
    </script>
</body>
</html>
